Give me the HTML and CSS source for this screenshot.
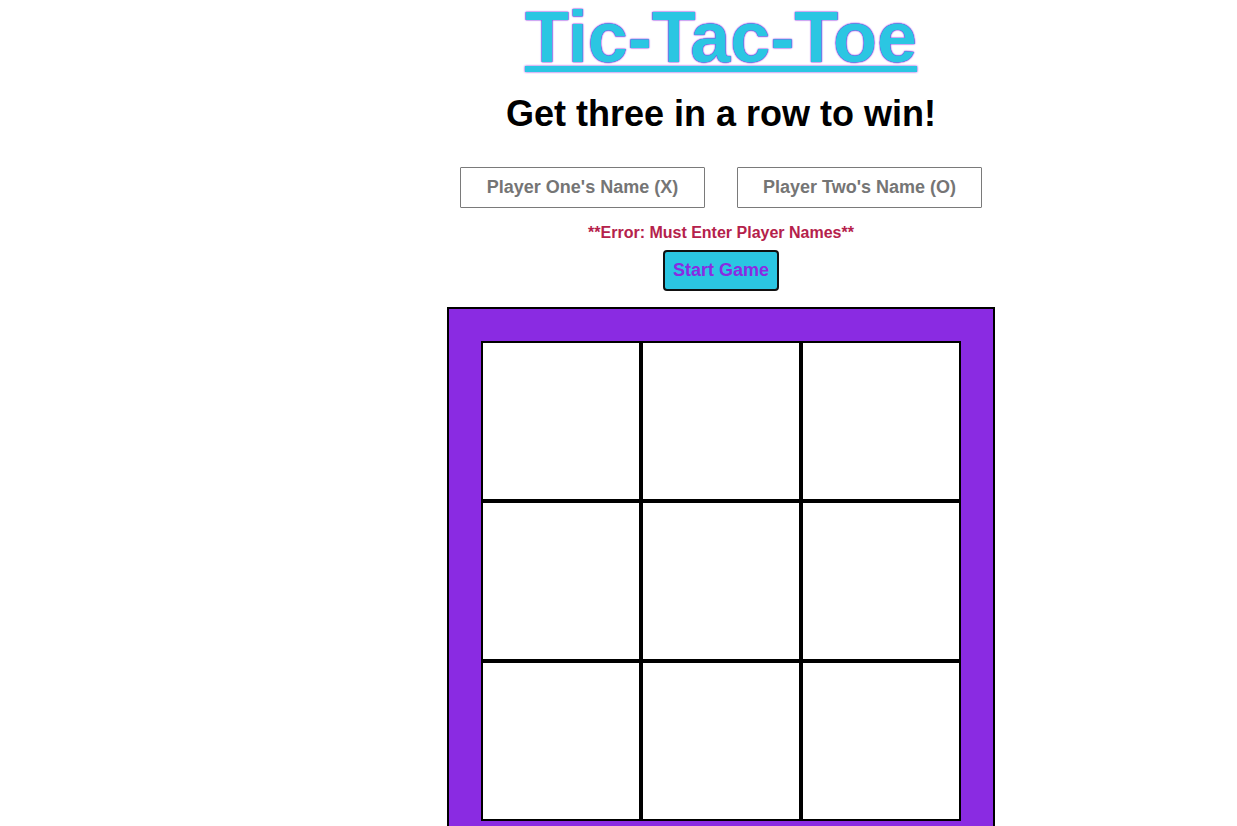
FILE: index.html
```html
<!DOCTYPE html>
<html lang="en">
<head>
<meta charset="utf-8">
<title>Tic-Tac-Toe</title>
<link rel="stylesheet" href="styles.css">
</head>
<body>
<div class="page">
  <aside class="side"></aside>
  <main class="main">
    <h1 class="title">Tic-Tac-Toe</h1>
    <h2 class="subtitle">Get three in a row to win!</h2>
    <div class="players">
      <input class="name" type="text" placeholder="Player One's Name (X)">
      <input class="name" type="text" placeholder="Player Two's Name (O)">
    </div>
    <p class="error">**Error: Must Enter Player Names**</p>
    <button class="start">Start Game</button>
    <div class="board">
      <div class="grid">
        <div class="cell"></div><div class="cell"></div><div class="cell"></div>
        <div class="cell"></div><div class="cell"></div><div class="cell"></div>
        <div class="cell"></div><div class="cell"></div><div class="cell"></div>
      </div>
    </div>
  </main>
</div>
</body>
</html>
```
FILE: styles.css
```css
html, body {
  margin: 0;
  padding: 0;
  background: #ffffff;
}
body {
  font-family: "Liberation Sans", Arial, sans-serif;
  color: #000;
}
.page {
  display: flex;
}
.side {
  width: 205px;
  flex: none;
}
.main {
  flex: 1;
  display: flex;
  flex-direction: column;
  align-items: center;
}
.title {
  margin: 0;
  padding-top: 1px;
  font-size: 72px;
  line-height: 72px;
  font-weight: bold;
  color: #2bc6e2;
  text-decoration: underline;
  text-decoration-thickness: 6px;
  text-underline-offset: 4px;
  text-shadow: 0 0 2px #8a2be2, 0 0 1px #8a2be2, 0 0 1px #8a2be2;
}
.subtitle {
  margin: 20px 0 0;
  font-size: 36px;
  font-weight: bold;
}
.players {
  margin-top: 32px;
  display: flex;
  gap: 32px;
}
.name {
  box-sizing: border-box;
  width: 245px;
  height: 41px;
  border: 1px solid #7a7a7a;
  border-radius: 1px;
  font-family: "Liberation Sans", Arial, sans-serif;
  font-size: 18px;
  font-weight: bold;
  text-align: center;
  padding: 0 6px;
  color: #333;
  background: #fff;
}
.name::placeholder {
  color: #757575;
  opacity: 1;
}
.error {
  margin: 16px 0 0;
  font-size: 16px;
  font-weight: bold;
  color: #b5214b;
}
.start {
  margin-top: 8px;
  box-sizing: border-box;
  height: 41px;
  padding: 0 8px;
  border: 2px solid #111;
  border-radius: 4px;
  background: #2bc6e2;
  color: #8a2be2;
  font-family: "Liberation Sans", Arial, sans-serif;
  font-size: 18px;
  font-weight: bold;
}
.board {
  margin-top: 16px;
  border: 2px solid #000;
  padding: 32px;
  background: #8a2be2;
}
.grid {
  display: grid;
  grid-template-columns: repeat(3, 160px);
  grid-template-rows: repeat(3, 160px);
}
.cell {
  box-sizing: border-box;
  border: 2px solid #000;
  background: #fff;
}
```
